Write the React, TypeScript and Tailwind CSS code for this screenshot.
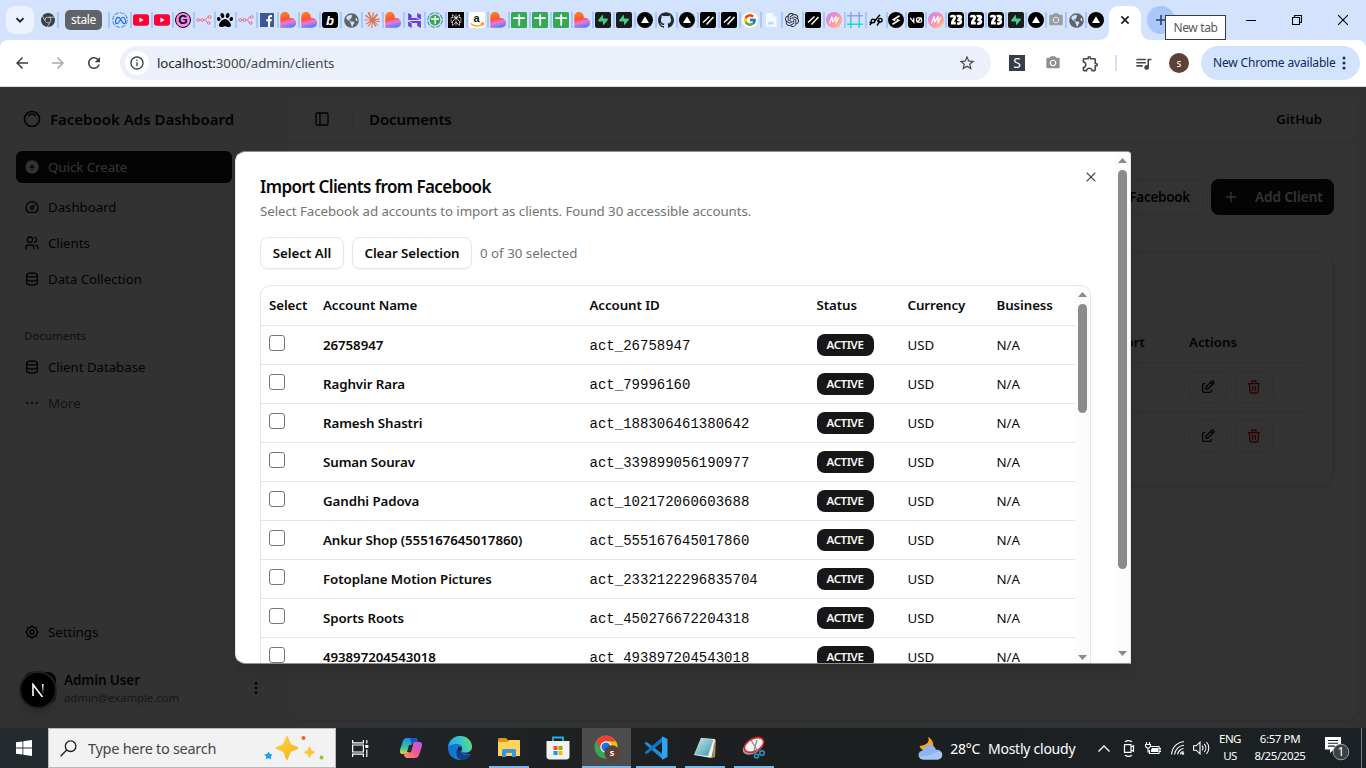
import React from "react";
import {
  SiMeta,
  SiHostinger,
  SiPerplexity,
  SiSupabase,
  SiGithub,
  SiOpenai,
  SiGooglechrome,
  SiClaude,
} from "react-icons/si";
import { FaPaw, FaGlobeAmericas } from "react-icons/fa";
import { FcGoogle } from "react-icons/fc";
import {
  MdCameraAlt,
  MdOutlineExtension,
  MdQueueMusic,
  MdStarBorder,
  MdRefresh,
  MdArrowBack,
  MdArrowForward,
  MdInfoOutline,
} from "react-icons/md";
import {
  TbInnerShadowTop,
  TbCirclePlusFilled,
  TbDashboard,
  TbUsers,
  TbDatabase,
  TbDots,
  TbDotsVertical,
  TbSettings,
  TbEdit,
  TbTrash,
  TbPlus,
} from "react-icons/tb";
import { PanelLeft, X } from "lucide-react";

/* ---------- favicons ---------- */

const Vercel = () => (
  <svg viewBox="0 0 16 16" className="size-4">
    <circle cx="8" cy="8" r="8" fill="#000" />
    <path d="M8 4.2 12 11H4z" fill="#fff" />
  </svg>
);
const YouTube = () => (
  <svg viewBox="0 0 16 16" className="size-4">
    <rect x="0" y="2.3" width="16" height="11.4" rx="2.6" fill="#ff0033" />
    <path d="M6.4 5.6 10.6 8l-4.2 2.4z" fill="#fff" />
  </svg>
);
const MetaRing = () => (
  <span className="relative flex size-4 items-center justify-center">
    <svg viewBox="0 0 16 16" className="absolute size-4">
      <circle cx="8" cy="8" r="7.3" fill="none" stroke="#5f8fd0" strokeWidth="1.1" strokeDasharray="4.6 1.1" />
    </svg>
    <SiMeta className="size-[11px] text-[#0a6cf0]" />
  </span>
);
const GCircle = () => (
  <span className="flex size-4 items-center justify-center rounded-full border border-black bg-[#f58af0] font-['Liberation_Sans',sans-serif] text-[12px] font-bold leading-none text-black">
    G
  </span>
);
const Flow = () => (
  <svg viewBox="0 0 16 16" className="size-4" fill="none" stroke="#e8708f" strokeWidth="1">
    <circle cx="2.2" cy="8" r="1.4" />
    <circle cx="6.4" cy="8" r="1.4" />
    <path d="M3.6 8H5M7.8 8h1.600c1.2 0 .8-3 2.600-3M9.400 8c1.200 0 .8 3 2.300 3" />
    <circle cx="13.6" cy="5" r="1.4" />
    <circle cx="12.8" cy="11" r="1.3" />
  </svg>
);
const Facebook = () => (
  <svg viewBox="0 0 16 16" className="size-4">
    <rect x="1" y="1" width="14" height="14" fill="#3b5998" />
    <path d="M9 15V9.3H7.2V7.2H9V5.7C9 3.8 10 3 11.6 3H13v2.1h-1c-.7 0-.9.3-.9.9v1.2h1.900l-.3 2.100h-1.600V15z" fill="#fff" />
  </svg>
);
const Lovable = () => (
  <svg viewBox="0 0 16 16" className="size-4">
    <defs>
      <linearGradient id="lv" x1=".2" y1="0" x2=".45" y2="1">
        <stop offset=".15" stopColor="#ff7a1a" />
        <stop offset=".45" stopColor="#ff4f3a" />
        <stop offset=".68" stopColor="#e879d8" />
        <stop offset="1" stopColor="#5a78ff" />
      </linearGradient>
    </defs>
    <path d="M.3 4.8C.3 2.2 2.4.1 5 .1s4.7 2.1 4.7 4.7V6h1.500a4.900 4.900 0 0 1 0 9.800H.3z" fill="url(#lv)" />
  </svg>
);
const Bolt = () => (
  <span className="flex size-4 items-center justify-center rounded-[3px] bg-black font-['Liberation_Sans',sans-serif] text-[13px] font-bold italic leading-none text-white">
    b
  </span>
);
const Globe = () => <FaGlobeAmericas className="size-[15px] text-[#5f6368]" />;
const Sheet = () => (
  <svg viewBox="0 0 16 16" className="size-4">
    <rect width="16" height="16" rx="1.5" fill="#34a853" />
    <path d="M8.2 2.2v11.6M2.2 6.2h11.6" stroke="#fff" strokeWidth="1.8" fill="none" />
  </svg>
);
const SheetRing = () => (
  <svg viewBox="0 0 16 16" className="size-4">
    <circle cx="8" cy="8" r="7.3" fill="none" stroke="#5b83b8" strokeWidth="1.1" strokeDasharray="4.6 1.1" />
    <circle cx="8" cy="8" r="5.4" fill="#34a853" />
    <path d="M8.2 4v8M4 7h8" stroke="#fff" strokeWidth="1.4" />
  </svg>
);
const Perplexity = () => (
  <span className="flex size-4 items-center justify-center bg-black">
    <SiPerplexity className="size-3 text-white" />
  </span>
);
const Amazon = () => (
  <svg viewBox="0 0 16 16" className="size-4">
    <rect width="16" height="16" rx="2" fill="#fff" />
    <text x="4.6" y="10.2" fontSize="11" fontWeight="700" fontFamily="Liberation Sans, sans-serif" fill="#111">
      a
    </text>
    <path d="M1.5 11.5c4 3.200 8.500 3.200 12 .8M11.800 11.300l2.700-.2-.6 2.600" stroke="#ff9900" strokeWidth="1.3" fill="none" />
  </svg>
);
const Supabase = () => (
  <span className="flex size-4 items-center justify-center rounded-[2px] bg-[#1c1c1c]">
    <SiSupabase className="size-[10px] text-[#3ecf8e]" />
  </span>
);
const Slashes = () => (
  <svg viewBox="0 0 16 16" className="size-4">
    <rect width="16" height="16" rx="2" fill="#000" />
    <path d="M3 10.500 9.500 4.500M6.500 12.500l7-7.500" stroke="#fff" strokeWidth="1.500" />
  </svg>
);
const Google = () => (
  <span className="flex size-4 items-center justify-center rounded-full bg-white">
    <FcGoogle className="size-[14px]" />
  </span>
);
const Doc = () => (
  <svg viewBox="0 0 16 16" className="size-4">
    <path d="M3 1h7l3.500 3.500V15H3z" fill="#f4f8ff" />
    <path d="M4.600 12.500c.5-2 1.500-3 3.200-3 2 0 3 1.400 3.600 3z" fill="#c3d6f7" />
    <path d="M10 1v3.500h3.500" fill="#dbe7fc" />
  </svg>
);
const MCircle = () => (
  <svg viewBox="0 0 16 16" className="size-4">
    <defs>
      <linearGradient id="mc" x1="0" y1="0" x2="1" y2="1">
        <stop offset="0" stopColor="#b28bff" />
        <stop offset=".5" stopColor="#ff8fae" />
        <stop offset="1" stopColor="#ffc46b" />
      </linearGradient>
    </defs>
    <circle cx="8" cy="8" r="8" fill="url(#mc)" />
    <path d="M3.500 11.500 6 5l.8 5L10 4.500V11l2.800-6" stroke="#fff" strokeWidth="1.300" fill="none" strokeLinejoin="round" />
  </svg>
);
const Frame = () => (
  <svg viewBox="0 0 16 16" className="size-4" fill="none" strokeWidth="1.500">
    <path d="M0 3.800h16M3.800 0v8M12.200 0v8" stroke="#8fa0f5" />
    <path d="M0 12.300h16M3.800 8v8M12.200 8v8" stroke="#22d3d8" />
  </svg>
);
const Pods = () => (
  <svg viewBox="0 0 16 16" className="size-4" fill="none" stroke="#000" strokeWidth="1.400">
    <path d="M6.300 9.500 12 2.800M9 13.500l3-4.500M1.800 13l2-2.500" />
    <circle cx="5" cy="9" r="1.800" />
    <circle cx="12.300" cy="8.200" r="1.800" />
    <path d="M1.500 10.500h2M9 9h1.500" />
  </svg>
);
const SRound = () => (
  <svg viewBox="0 0 16 16" className="size-4">
    <circle cx="8" cy="8" r="8" fill="#000" />
    <path d="M11.500 3.800 5.500 7.600l1.800.8M4.500 12.200l6-3.800-1.800-.8" stroke="#fff" strokeWidth="1.600" fill="none" />
  </svg>
);
const V0 = () => (
  <svg viewBox="0 0 16 16" className="size-4">
    <rect width="16" height="16" rx="3" fill="#000" />
    <path
      d="m2.200 5.800 3.600 4.400V5.800M8.600 9V7c0-.7.500-1.200 1.200-1.200h2.600c.7 0 1.200.5 1.200 1.200v2c0 .7-.5 1.200-1.200 1.200H9.800C9.100 10.200 8.600 9.700 8.600 9zM9 10l4.300-4"
      stroke="#fff"
      strokeWidth="1.200"
      fill="none"
    />
  </svg>
);
const Zed = () => (
  <svg viewBox="0 0 16 16" className="size-4">
    <rect width="16" height="16" rx="3.500" fill="#000" />
    <path
      d="M3 5.300C3.200 3.600 6.700 3.500 6.700 5.500 6.700 7.500 4 8.500 4.200 11.200h3.600M8.800 4.600c1.200-1 4.200-.6 4 1-.2 1.400-2.200 1.200-2.200 2.200 2 .2 2.600 1.200 2.200 2.600-.4 1.200-2 1.400-3.600.8"
      stroke="#fff"
      strokeWidth="2.700"
      fill="none"
    />
  </svg>
);
const Camera = () => <MdCameraAlt className="size-4 text-[#9b9b9b]" />;

const wideTabs: React.ReactNode[] = [
  <MetaRing />,
  <YouTube />,
  <YouTube />,
  <GCircle />,
  <Flow />,
  <FaPaw className="size-4 text-black" />,
  <Flow />,
  <Facebook />,
  <Lovable />,
  <Lovable />,
  <Bolt />,
  <Globe />,
  <SiClaude className="size-4 text-[#d97757]" />,
  <Lovable />,
  <SiHostinger className="size-[15px] text-[#673de6]" />,
  <SheetRing />,
  <Perplexity />,
  <Amazon />,
  <Lovable />,
  <Sheet />,
  <Sheet />,
  <Sheet />,
  <Lovable />,
  <Supabase />,
  <Supabase />,
  <Vercel />,
  <SiGithub className="size-4 text-[#24292f]" />,
  <Vercel />,
  <Slashes />,
  <Slashes />,
  <Google />,
  <Doc />,
  <SiOpenai className="size-[14px] text-[#222]" />,
  <Slashes />,
  <MCircle />,
  <Frame />,
  <Pods />,
];
const narrowTabs: React.ReactNode[] = [
  <SRound />,
  <V0 />,
  <MCircle />,
  <Zed />,
  <Zed />,
  <Zed />,
  <Supabase />,
  <Vercel />,
  <Camera />,
  <Globe />,
  <Vercel />,
];

/* ---------- browser chrome ---------- */

function TabStrip() {
  return (
    <div className="relative flex h-10 w-full items-center bg-[#d3e3fd]">
      <div className="ml-[6px] flex h-7 w-7 items-center justify-center rounded-[9px] bg-[#ecf3fe]">
        <svg viewBox="0 0 10 10" className="size-[10px]" fill="none" stroke="#1f1f1f" strokeWidth="1.8">
          <path d="M1.500 3.200 5 6.700l3.500-3.500" />
        </svg>
      </div>
      <SiGooglechrome className="ml-[7px] size-[14px] text-[#3c4043]" />
      <div className="ml-[2px] h-4 w-[2px] bg-[#a8c7fa]" />
      <div className="ml-[6px] flex h-5 w-[37px] items-center justify-center rounded-[5px] bg-[#5f6368] text-[12px] tracking-[-0.35px] text-white">
        stale
      </div>
      <div className="ml-[6px] mr-[2px] h-4 w-[2px] bg-[#a8c7fa]" />
      {wideTabs.map((icon, i) => (
        <div key={i} className="flex w-[21px] shrink-0 items-center">
          <span className="flex size-4 items-center justify-center">{icon}</span>
          <span className="ml-[2px] h-4 w-[2px] bg-[#a8c7fa]" />
        </div>
      ))}
      <div className="-ml-px flex">
        {narrowTabs.map((icon, i) => (
          <div key={i} className="flex w-5 shrink-0 items-center">
            <span className="flex size-4 items-center justify-center">{icon}</span>
            {i < narrowTabs.length - 1 && <span className="ml-px h-4 w-[2px] bg-[#a8c7fa]" />}
          </div>
        ))}
      </div>
      <div className="flex h-10 items-end">
        <svg viewBox="0 0 52 34" className="-ml-[9px] h-[34px] w-[52px]">
          <path d="M0 34c6 0 10-4 10-10V10C10 4 14 0 20 0h12c6 0 10 4 10 10v14c0 6 4 10 10 10z" fill="#fff" />
          <path d="m22.400 10.400 7.200 7.200m0-7.200-7.200 7.200" stroke="#1f1f1f" strokeWidth="1.700" />
        </svg>
      </div>
      <div className="-ml-[4px] flex size-7 items-center justify-center rounded-full bg-[#a8c7fa]">
        <svg viewBox="0 0 12 12" className="size-3">
          <path d="M6 1v10M1 6h10" stroke="#30405c" strokeWidth="1.600" />
        </svg>
      </div>
      <div className="ml-auto flex items-center gap-9 pr-[18px]">
        <div className="h-px w-[10px] bg-black" />
        <svg viewBox="0 0 10 10" className="size-[10px]" fill="none" stroke="#000" strokeWidth="1.100">
          <path d="M.5 2.500h7v7h-7zM2.500 2.500v-2h7v7h-2" />
        </svg>
        <svg viewBox="0 0 10 10" className="size-[10px]" stroke="#000" strokeWidth="1.100">
          <path d="m0 0 10 10M10 0 0 10" />
        </svg>
      </div>
      <div className="absolute left-[1165px] top-[15px] z-20 flex h-[25px] w-[61px] items-center justify-center border border-[#3a3a3a] bg-white text-[12px] tracking-[-0.35px] text-[#575757]">
        New tab
      </div>
    </div>
  );
}

function Toolbar() {
  return (
    <div className="bg-[#d3e3fd]">
      <div className="flex h-[46px] items-center rounded-t-[8px] bg-white">
        <MdArrowBack className="ml-[13px] size-[18px] text-[#3c4043]" />
        <MdArrowForward className="ml-[18px] size-[18px] text-[#a9abae]" />
        <MdRefresh className="ml-[18px] size-[18px] text-[#3c4043]" />
        <div className="ml-[17px] flex h-[34px] w-[871px] items-center rounded-full bg-[#ecf0fa] px-[5px]">
          <span className="flex size-6 items-center justify-center rounded-full bg-white">
            <MdInfoOutline className="size-4 text-[#3c4043]" />
          </span>
          <span className="ml-2 translate-y-px text-[13.3px] tracking-[-0.09px] text-[#1f1f1f]">
            localhost:<span className="text-[#474747]">3000/admin/clients</span>
          </span>
          <MdStarBorder className="ml-auto mr-[10px] size-[18px] text-[#474747]" />
        </div>
        <div className="ml-[18px] flex size-4 items-center justify-center bg-[#353c4a] text-[14px] leading-none text-white">S</div>
        <MdCameraAlt className="ml-5 size-4 text-[#8f8f8f]" />
        <MdOutlineExtension className="ml-5 size-[19px] text-[#474747]" />
        <div className="ml-[15px] h-4 w-[2px] bg-[#d3e3fd]" />
        <MdQueueMusic className="ml-[17px] size-[19px] text-[#474747]" />
        <div className="ml-4 flex size-5 items-center justify-center rounded-full bg-[#5d4037] text-[10px] leading-none text-white">s</div>
        <div className="ml-3 flex h-[34px] w-[159px] items-center rounded-full bg-[#d3e3fd] pl-3 text-[12px] tracking-[-0.17px] text-[#0b2a66]">
          New Chrome available
          <svg viewBox="0 0 4 16" className="ml-auto mr-[14px] h-4 w-1" fill="#12306b">
            <circle cx="2" cy="3" r="1.5" />
            <circle cx="2" cy="8" r="1.5" />
            <circle cx="2" cy="13" r="1.5" />
          </svg>
        </div>
      </div>
      <div className="h-px bg-[#dcdcdc]" />
    </div>
  );
}

/* ---------- dashboard ---------- */

function NavItem({ icon, label, muted }: { icon: React.ReactNode; label: string; muted?: boolean }) {
  return (
    <div className={`flex h-8 items-center gap-2 px-2 ${muted ? "text-[#0a0a0a]/70" : "text-[#0a0a0a]"}`}>
      {icon}
      <span className="translate-y-px">{label}</span>
    </div>
  );
}

function Sidebar() {
  return (
    <aside className="flex w-[280px] flex-col px-4 text-[13.3px] tracking-[-0.05px]">
      <div className="mt-4 flex h-8 items-center gap-2 px-[6px]">
        <TbInnerShadowTop className="size-5 text-[#0a0a0a]" />
        <span className="text-[15px] font-semibold tracking-[-0.01px] text-[#0a0a0a]">Facebook Ads Dashboard</span>
      </div>
      <div className="mt-4 flex h-8 w-[216px] items-center gap-2 rounded-md bg-[#171717] px-2 text-[#fafafa]">
        <TbCirclePlusFilled className="size-4" />
        <span className="translate-y-px">Quick Create</span>
      </div>
      <div className="mt-2 flex flex-col gap-1">
        <NavItem icon={<TbDashboard className="size-4" />} label="Dashboard" />
        <NavItem icon={<TbUsers className="size-4" />} label="Clients" />
        <NavItem icon={<TbDatabase className="size-4" />} label="Data Collection" />
      </div>
      <div className="mt-[25px] flex h-8 items-center px-2 text-[11.5px] font-medium tracking-[-0.1px] text-[#0a0a0a]/70">Documents</div>
      <div className="-mt-px flex flex-col gap-1">
        <NavItem icon={<TbDatabase className="size-4" />} label="Client Database" />
        <NavItem icon={<TbDots className="size-4" />} label="More" muted />
      </div>
      <div className="mb-4 mt-auto">
        <NavItem icon={<TbSettings className="size-4" />} label="Settings" />
      </div>
      <div className="mb-4 flex h-12 items-center px-2">
        <div className="size-8 shrink-0 rounded-lg bg-[#171717]" />
        <div className="ml-2 flex flex-col leading-none">
          <span className="text-[13.5px] font-semibold leading-[18px] tracking-[-0.1px] text-[#0a0a0a]">Admin User</span>
          <span className="text-[11.5px] leading-[17px] tracking-[-0.12px] text-[#737373]">admin@example.com</span>
        </div>
        <TbDotsVertical className="-mr-2 ml-auto size-4 text-[#0a0a0a]" />
      </div>
    </aside>
  );
}

function ClientActions() {
  return (
    <div className="flex h-[49px] items-center gap-2 border-t border-[#e5e5e5] pl-[852px]">
      <span className="flex h-8 w-[38px] items-center justify-center rounded-lg border border-[#e5e5e5]">
        <TbEdit className="size-4 text-[#0a0a0a]" />
      </span>
      <span className="flex h-8 w-[38px] items-center justify-center rounded-lg border border-[#e5e5e5]">
        <TbTrash className="size-4 text-[#e7000b]" />
      </span>
    </div>
  );
}

function MainPanel() {
  return (
    <main className="my-2 ml-2 mr-2 flex w-[1070px] flex-col rounded-xl bg-white shadow-sm">
      <header className="flex h-12 items-center border-b border-[#e5e5e5] pl-[26px] pr-9 text-[#0a0a0a]">
        <PanelLeft className="size-4" />
        <span className="ml-[22px] h-4 w-px bg-[#e5e5e5]" />
        <span className="ml-4 translate-y-px text-[15px] font-semibold tracking-[-0.1px]">Documents</span>
        <span className="ml-auto translate-y-px text-[13.3px] font-semibold">GitHub</span>
      </header>
      <div className="flex justify-end gap-2 pr-6 pt-9 text-[13.5px] font-semibold">
        <span className="flex h-9 items-center rounded-lg border border-[#e5e5e5] px-3 tracking-[-0.28px] text-[#0a0a0a]">Import from Facebook</span>
        <span className="flex h-9 w-[123px] items-center rounded-lg bg-[#171717] pl-3 text-[#fafafa]">
          <TbPlus className="size-4" />
          <span className="ml-4">Add Client</span>
        </span>
      </div>
      <section className="mx-6 mt-9 h-[235px] rounded-[14px] border border-[#e5e5e5] px-6 pt-[70px] shadow-sm">
        <div className="flex h-10 items-center pt-[2px] text-[13.3px] font-semibold text-[#0a0a0a]">
          <span className="w-[852px] pr-[44px] text-right">Import</span>
          <span>Actions</span>
        </div>
        <ClientActions />
        <ClientActions />
      </section>
    </main>
  );
}

/* ---------- import dialog ---------- */

const accounts: [string, string][] = [
  ["26758947", "act_26758947"],
  ["Raghvir Rara", "act_79996160"],
  ["Ramesh Shastri", "act_188306461380642"],
  ["Suman Sourav", "act_339899056190977"],
  ["Gandhi Padova", "act_102172060603688"],
  ["Ankur Shop (555167645017860)", "act_555167645017860"],
  ["Fotoplane Motion Pictures", "act_2332122296835704"],
  ["Sports Roots", "act_450276672204318"],
  ["493897204543018", "act_493897204543018"],
];

const columns = "grid grid-cols-[54px_266.5px_227px_91px_89px_86px] items-center *:px-2";

function Arrow({ down }: { down?: boolean }) {
  return (
    <svg viewBox="0 0 9 5" className="h-[5px] w-[9px] shrink-0" fill="#8b8b8b">
      <path d={down ? "M0 0h9L4.5 5z" : "M0 5h9L4.5 0z"} />
    </svg>
  );
}

function ImportDialog() {
  return (
    <div className="absolute left-[235px] top-[64px] flex h-[513px] w-[896px] overflow-hidden rounded-l-[10px] rounded-tr-[4px] border border-x-[#e5e5e5] border-y-[#8f8f8f] bg-white shadow-lg">
      <div className="flex w-[879px] shrink-0 flex-col pl-6 text-[#0a0a0a]">
        <div className="mt-[26px] flex h-5 items-center">
          <h2 className="text-[17px] font-semibold leading-none tracking-[-0.58px]">Import Clients from Facebook</h2>
        </div>
        <p className="mt-[6px] text-[13.3px] leading-5 tracking-[-0.06px] text-[#737373]">
          Select Facebook ad accounts to import as clients. Found 30 accessible accounts.
        </p>
        <div className="mt-4 flex items-center gap-2 text-[13.3px] font-semibold">
          <button className="h-8 w-[84px] rounded-lg border border-[#e5e5e5] pt-px tracking-[-0.02px] shadow-xs">Select All</button>
          <button className="h-8 w-[120px] rounded-lg border border-[#e5e5e5] pt-px tracking-[-0.08px] shadow-xs">Clear Selection</button>
          <span className="translate-y-px font-normal text-[#737373]">0 of 30 selected</span>
        </div>
        <div className="mt-4 flex h-[400px] w-[831px] shrink-0 overflow-hidden rounded-t-[10px] border border-[#e5e5e5]">
          <div className="w-[814px] shrink-0 text-[13.3px] tracking-[-0.08px]">
            <div className={`${columns} h-10 border-b border-[#e5e5e5] font-semibold`}>
              <span>Select</span>
              <span>Account Name</span>
              <span>Account ID</span>
              <span>Status</span>
              <span>Currency</span>
              <span>Business</span>
            </div>
            {accounts.map(([name, id]) => (
              <div key={id} className={`${columns} h-[39px] border-b border-[#e5e5e5]`}>
                <span>
                  <span className="-mt-[5px] block size-4 rounded-[3px] border border-[#767676] bg-white" />
                </span>
                <span className="translate-y-px font-semibold">{name}</span>
                <span className="translate-y-px font-['Liberation_Mono',monospace] text-[14px] tracking-[0.01px]">{id}</span>
                <span>
                  <span className="flex h-[22px] w-[57px] items-center justify-center rounded-lg bg-[#171717] text-[11.5px] font-semibold tracking-[-0.4px] text-[#fafafa]">
                    ACTIVE
                  </span>
                </span>
                <span className="translate-y-px tracking-normal">USD</span>
                <span className="translate-y-px tracking-normal">N/A</span>
              </div>
            ))}
          </div>
          <div className="flex w-[15px] shrink-0 flex-col items-center bg-[#fcfcfc] pt-[6px]">
            <Arrow />
            <div className="mt-[7px] h-[109px] w-[9px] shrink-0 rounded-full bg-[#8b8b8b]" />
            <div className="mt-[242px]">
              <Arrow down />
            </div>
          </div>
        </div>
      </div>
      <div className="flex w-[15px] shrink-0 flex-col items-center bg-[#fcfcfc] pt-[6px]">
        <Arrow />
        <div className="mt-[7px] h-[399px] w-[9px] shrink-0 rounded-full bg-[#8b8b8b]" />
        <div className="mt-[82px]">
          <Arrow down />
        </div>
      </div>
      <X className="absolute left-[847px] top-[17px] size-4 text-[#4b4b4b]" strokeWidth={1.6} />
    </div>
  );
}

/* ---------- taskbar ---------- */

function AppSlot({ children, running, active }: { children: React.ReactNode; running?: boolean; active?: boolean }) {
  return (
    <div className={`flex h-10 w-[49px] flex-col items-center ${active ? "bg-[#4c4c4c]" : ""}`}>
      <div className="flex h-[38px] items-center justify-center pt-[2px]">{children}</div>
      <div className={`h-[2px] ${active ? "w-full bg-[#76b9ed]" : running ? "w-10 bg-[#76b9ed]" : "w-0"}`} />
    </div>
  );
}

function Taskbar() {
  return (
    <footer className="flex h-10 w-full items-center bg-linear-to-r from-[#242b2f] via-[#1d1f20] to-[#1b2124] text-white">
      <div className="flex w-12 justify-center">
        <svg viewBox="0 0 16 16" className="size-4" fill="#fff">
          <path d="M0 2.300 6.500 1.400v6.200H0zM7.300 1.300 16 0v7.600H7.300zM0 8.400h6.500v6.200L0 13.700zM7.300 8.400H16V16l-8.700-1.300z" />
        </svg>
      </div>
      <div className="flex h-10 w-[288px] items-center border border-[#b9b9b9] bg-[#f2f2f2] pl-[11px]">
        <svg viewBox="0 0 17 17" className="size-[17px]" fill="none" stroke="#1c1c1c" strokeWidth="1.3">
          <circle cx="10.6" cy="6.2" r="5.3" />
          <path d="M6.700 10 .6 16.200" />
        </svg>
        <span className="ml-[11px] translate-y-px text-[14.5px] tracking-[-0.28px] text-[#444]">Type here to search</span>
        <svg viewBox="0 0 62 28" className="ml-auto mr-[10px] h-7 w-[62px]">
          <defs>
            <linearGradient id="spk" x1="0" y1="0" x2="1" y2="1">
              <stop offset="0" stopColor="#ffd84a" />
              <stop offset="1" stopColor="#f5ae14" />
            </linearGradient>
          </defs>
          <path d="M24 2c1.500 0 2.500 6.500 4 8s7.500 2.500 7.500 4-6 2.500-7.500 4-2.500 8-4 8-2.500-6.500-4-8-7.500-2.500-7.500-4 6-2.500 7.500-4 2.500-8 4-8z" fill="url(#spk)" />
          <path d="M46.500 12.500c1 0 1.300 3 2 3.700s3.500 1 3.500 2-2.800 1.300-3.500 2-1 3.500-2 3.500-1.300-2.800-2-3.500-3.500-1-3.500-2 2.800-1.300 3.500-2 1-3.700 2-3.700z" fill="#fdc52c" />
          <path d="m5.500 17.500 1.400 2.500 2.600.5-1.700 2 .4 2.800-2.700-1-2.500 1 .2-2.800-2-2 2.800-.4z" fill="#10a5f0" />
          <circle cx="40.5" cy="4" r="2" fill="#f2622a" />
          <circle cx="58.5" cy="23.5" r="2" fill="#8cc63f" />
        </svg>
      </div>

      <div className="flex w-[50px] justify-center pr-px">
        <svg viewBox="0 0 17 17" className="size-[17px]" fill="none" stroke="#fff" strokeWidth="1.2">
          <path d="M.6 0v2.800h10.800V0M.6 17v-2.800h10.800V17M.6 5h10.800v7H.6zM14.800 0v3.500M14.800 9.500V17" />
          <path d="M13.300 5h3v3h-3z" fill="#fff" stroke="none" />
        </svg>
      </div>
      <AppSlot>
        <svg viewBox="0 0 24 24" className="size-6">
          <defs>
            <linearGradient id="cpa" x1="0" y1="0" x2="0" y2="1">
              <stop offset="0" stopColor="#1a8cf0" />
              <stop offset=".6" stopColor="#35c3a0" />
              <stop offset="1" stopColor="#e8d23c" />
            </linearGradient>
            <linearGradient id="cpb" x1="1" y1="0" x2="0" y2="1">
              <stop offset="0" stopColor="#b45cf0" />
              <stop offset=".5" stopColor="#f0569c" />
              <stop offset="1" stopColor="#ff9a4a" />
            </linearGradient>
          </defs>
          <path d="M8 2h8c1.500 0 2.300 1 2.700 2.500L19.500 7H15c-2 0-2.500 1-3 2.500L10 16c-.5 1.500-1 2-2.500 2H4c-3 0-3.500-2-2.800-4.500l2.500-8C4.500 3 6 2 8 2z" fill="url(#cpa)" />
          <path d="M11 2h5c1.500 0 2.300 1 2.700 2.500L19.500 7H15c-1.200 0-2 .4-2.500 1.300z" fill="#1c50d0" />
          <path d="M16 22H8c-1.500 0-2.300-1-2.700-2.500L4.500 17H9c2 0 2.500-1 3-2.500L14 8c.5-1.500 1-2 2.500-2H20c3 0 3.500 2 2.800 4.500l-2.500 8C19.500 21 18 22 16 22z" fill="url(#cpb)" />
          <path d="m10 9-2 7h4l2-7z" fill="#232629" />
        </svg>
      </AppSlot>
      <AppSlot>
        <svg viewBox="0 0 24 24" className="size-6">
          <defs>
            <linearGradient id="edg" x1="0" y1=".4" x2="1" y2=".2">
              <stop offset="0" stopColor="#2ba7e8" />
              <stop offset=".6" stopColor="#3cc9c4" />
              <stop offset="1" stopColor="#6be05c" />
            </linearGradient>
          </defs>
          <circle cx="12" cy="12" r="12" fill="#1177d0" />
          <path d="M13 24c5.500 0 9-3 10.500-6.500C20 20 14 20 12.500 14.500L9 13c-1.500 5 0 9.500 4 11z" fill="#123f86" />
          <path d="M24 10.500c0 4-3 6-6.500 6-1 0-2-.1-2.700-.4 2 2.500 6.200 2.400 8.700 1.400.5-1.500.7-4 .5-7z" fill="#1f2426" />
          <path d="M.2 10.500C1.200 4.500 6 0 12 0c7 0 12 5 12 10.500 0 4-3 6-6.500 6-3 0-4.500-1.200-4-2.500 1.500-2 .8-6-4.500-6C4.500 8 1 9.500.2 10.500z" fill="url(#edg)" />
          <circle cx="12" cy="12.800" r="2.200" fill="#1f2426" />
        </svg>
      </AppSlot>
      <AppSlot running>
        <svg viewBox="0 0 22 20" className="h-5 w-[22px]">
          <path d="M0 1.500C0 .7.500 0 1.300 0H8l2 2v4H0z" fill="#d99a0b" />
          <path d="M0 4h9l2-2h10c.6 0 1 .4 1 1v15H0z" fill="#ffd35c" />
          <path d="M4 19v-6.500c0-.8.600-1.500 1.500-1.500h11c.9 0 1.500.7 1.500 1.500V19h-4v-4H8v4z" fill="#3c96dc" />
        </svg>
      </AppSlot>
      <AppSlot>
        <svg viewBox="0 0 24 24" className="size-6">
          <path d="M7 6V1.500h10V6" fill="none" stroke="#24b0e8" strokeWidth="1.8" />
          <path d="M.5 5h23v15.500c0 2-1.500 3-3 3h-17c-1.500 0-3-1-3-3z" fill="#f2f2f2" />
          <path d="M7.500 10h4v4h-4z" fill="#f25022" />
          <path d="M12.500 10h4v4h-4z" fill="#7fba00" />
          <path d="M7.500 15h4v4h-4z" fill="#00a4ef" />
          <path d="M12.500 15h4v4h-4z" fill="#ffb900" />
        </svg>
      </AppSlot>
      <AppSlot running active>
        <svg viewBox="0 0 26 26" className="size-[26px]">
          <circle cx="12" cy="12" r="11.5" fill="#34a853" />
          <path d="M12 6.300h10a11.500 11.500 0 0 1-10 17.200l5-8.500z" fill="#fbbc05" />
          <path d="M2 6.200A11.500 11.500 0 0 1 22 6.300H12L7 15z" fill="#ea4335" />
          <circle cx="12" cy="12" r="5.7" fill="#fff" />
          <circle cx="12" cy="12" r="4.5" fill="#1a73e8" />
          <circle cx="18" cy="18" r="7.7" fill="#5d4037" />
          <text x="18" y="21" fontSize="9" fontWeight="700" textAnchor="middle" fontFamily="Noto Sans, sans-serif" fill="#fff">
            s
          </text>
        </svg>
      </AppSlot>
      <AppSlot running>
        <svg viewBox="0 0 24 24" className="size-6">
          <path d="m.5 7.500 2-1.700L19 18.500v5z" fill="#1f8fd8" />
          <path d="m.5 16.500 2 1.700L19 5.500v-5z" fill="#0f78c4" />
          <path d="m18 .2 5.500 2.800v18L18 23.800z" fill="#2ea3f0" />
        </svg>
      </AppSlot>
      <AppSlot running>
        <svg viewBox="0 0 24 24" className="size-6">
          <defs>
            <linearGradient id="npd" x1="0" y1="0" x2="1" y2="1">
              <stop offset="0" stopColor="#bfe8ee" />
              <stop offset="1" stopColor="#3f98a8" />
            </linearGradient>
          </defs>
          <path d="m21 3 2 1-1 17-3 1z" fill="#b78b4a" />
          <path d="m8 2 14 1-3.500 19L1 19z" fill="#eef5f6" />
          <path d="m8 2.500 12.500 1L15 20 1.500 18.500z" fill="url(#npd)" />
        </svg>
      </AppSlot>
      <AppSlot running>
        <svg viewBox="0 0 24 24" className="size-6">
          <ellipse cx="11" cy="11" rx="11" ry="6.5" transform="rotate(-28 11 11)" fill="#9aa0a4" />
          <ellipse cx="12" cy="9" rx="10.3" ry="6.3" transform="rotate(-28 12 9)" fill="#f4f4f4" stroke="#d8282c" strokeWidth="1.6" />
          <path d="m9 4 6.500 11M15 4l-3 11" stroke="#8a8f93" strokeWidth="1.3" />
          <circle cx="14.5" cy="20" r="2" fill="none" stroke="#2f93d8" strokeWidth="1.5" />
          <circle cx="20" cy="17" r="2.300" fill="none" stroke="#2f93d8" strokeWidth="1.5" />
        </svg>
      </AppSlot>

      <div className="ml-auto flex items-center">
        <svg viewBox="0 0 25 24" className="h-6 w-[25px]">
          <path d="M10 1c2 4 0 8-8.500 9 1 3 4 5 7.500 5 5 0 7-4 6-8-.6-3-3-5.300-5-6z" fill="#f6a623" />
          <path d="M5.500 23.500C2.500 23.500.5 21.500.5 19s1.800-4.300 4.300-4.500C5.500 11 8.300 9 11.500 9c3.300 0 5.700 2 6.500 4.800 3.500-.2 6.200 1.900 6.200 4.900 0 2.800-2 4.800-5 4.800z" fill="#8fb4f0" />
          <path d="M5.500 20C9 21 16 16 22.500 15.500c1 .8 1.700 2 1.700 3.300 0 2.700-2 4.700-5 4.700H5.500c-2 0-3.600-1-4.400-2.500z" fill="#a9c6f8" />
        </svg>
        <span className="ml-[7px] text-[14px] tracking-[-0.3px]">28°C</span>
        <span className="ml-2 w-[88px] whitespace-nowrap text-[14px] tracking-[-0.25px]">Mostly cloudy</span>
        <svg viewBox="0 0 12 7" className="ml-[22px] h-[7px] w-3" fill="none" stroke="#fff" strokeWidth="1.3">
          <path d="M.5 6.500 6 1l5.500 5.500" />
        </svg>
        <svg viewBox="0 0 14 17" className="ml-[12px] h-[17px] w-[14px]" fill="none" stroke="#fff" strokeWidth="1.2">
          <path d="M2.500 4.600H9v7.800H2.500zM9 7l2.500-1.300v5.600L9 10M3 1.800C5 .5 8 .5 10 1.800M3 15.200c2 1.300 5 1.300 7 0" />
        </svg>
        <svg viewBox="0 0 16 13" className="ml-[9px] h-[13px] w-4" fill="none" stroke="#fff" strokeWidth="1.1">
          <path d="M5 4.500h9v7H4.500V8M14.500 6.500H16v3h-1.500M1.500 0v2.500M4.500 0v2.500M.5 2.500h5v2L4 6H2L.5 4.500zM3 6v4h1.500" />
          <path d="M7 6h6v4H6V8z" fill="#fff" stroke="none" />
        </svg>
        <svg viewBox="0 0 14 14" className="ml-[10px] size-[14px]" fill="none" stroke="#fff" strokeWidth="1.1">
          <path d="M.6 13.500C1 6.500 6 1.200 13 .8M3.600 13.500C4 8.500 8 4.500 13 4.200M6.600 13.500c.2-3 2.900-5.700 6-6M9.500 13.500c0-1.500 1.300-2.800 3-3" />
          <circle cx="12" cy="12.5" r="1.2" fill="#fff" stroke="none" />
        </svg>
        <svg viewBox="0 0 17 14" className="ml-[8px] h-[14px] w-[17px]" fill="none" stroke="#fff" strokeWidth="1.1">
          <path d="M.6 4.800h2.600L7 1.200v11.600L3.200 9.200H.6zM9 4.700c1.200 1.300 1.200 3.300 0 4.600M11.200 2.800c2.200 2.400 2.200 6 0 8.400M13.500 1c3 3.400 3 8.600 0 12" />
        </svg>
        <div className="ml-[7px] flex w-[26px] -translate-y-px flex-col items-center text-[11.5px] leading-[17px] tracking-[-0.5px]">
          <span>ENG</span>
          <span>US</span>
        </div>
        <div className="ml-[9px] flex w-[56px] -translate-y-px flex-col items-center whitespace-nowrap text-[11.5px] leading-[17px] tracking-[-0.4px]">
          <span>6:57 PM</span>
          <span>8/25/2025</span>
        </div>
        <svg viewBox="0 0 25 25" className="ml-[17px] mr-[11px] h-[25px] w-[25px]">
          <path d="M0 1h16v12.500H9L5 17v-3.500H0z" fill="#fff" />
          <path d="M3 4.500h10M3 7.300h10M3 10.100h7" stroke="#1b2124" strokeWidth="1.1" />
          <circle cx="16" cy="16" r="7.8" fill="#3b4043" stroke="#9a9fa2" strokeWidth="1" />
          <text x="16" y="20.2" fontSize="12" textAnchor="middle" fontFamily="Noto Sans, sans-serif" fill="#fff">
            1
          </text>
        </svg>
        <div className="mr-1 h-10 w-px bg-[#777b7d]" />
      </div>
    </footer>
  );
}

export default function App() {
  return (
    <div className="flex h-[768px] w-[1366px] flex-col overflow-hidden font-['Noto_Sans',sans-serif]">
      <TabStrip />
      <Toolbar />
      <div className="relative flex h-[641px] overflow-hidden bg-[#fafafa]">
        <Sidebar />
        <MainPanel />
        <div className="absolute inset-0 bg-black/80" />
        <ImportDialog />
        <div className="absolute left-[19px] top-[584px] flex size-[38px] items-center justify-center rounded-full border-2 border-[#202020] bg-black shadow-lg">
          <svg viewBox="0 0 14 14" className="size-[14px]" fill="none" strokeWidth="1.6">
            <defs>
              <linearGradient id="nx" x1="0" y1="0" x2="0" y2="1">
                <stop offset="0" stopColor="#fff" />
                <stop offset="1" stopColor="#fff" stopOpacity="0.1" />
              </linearGradient>
            </defs>
            <path d="M2 13V1.500L11.500 14" stroke="#fff" />
            <path d="M11 1h1.600v9H11z" fill="url(#nx)" />
          </svg>
        </div>
      </div>
      <Taskbar />
    </div>
  );
}
